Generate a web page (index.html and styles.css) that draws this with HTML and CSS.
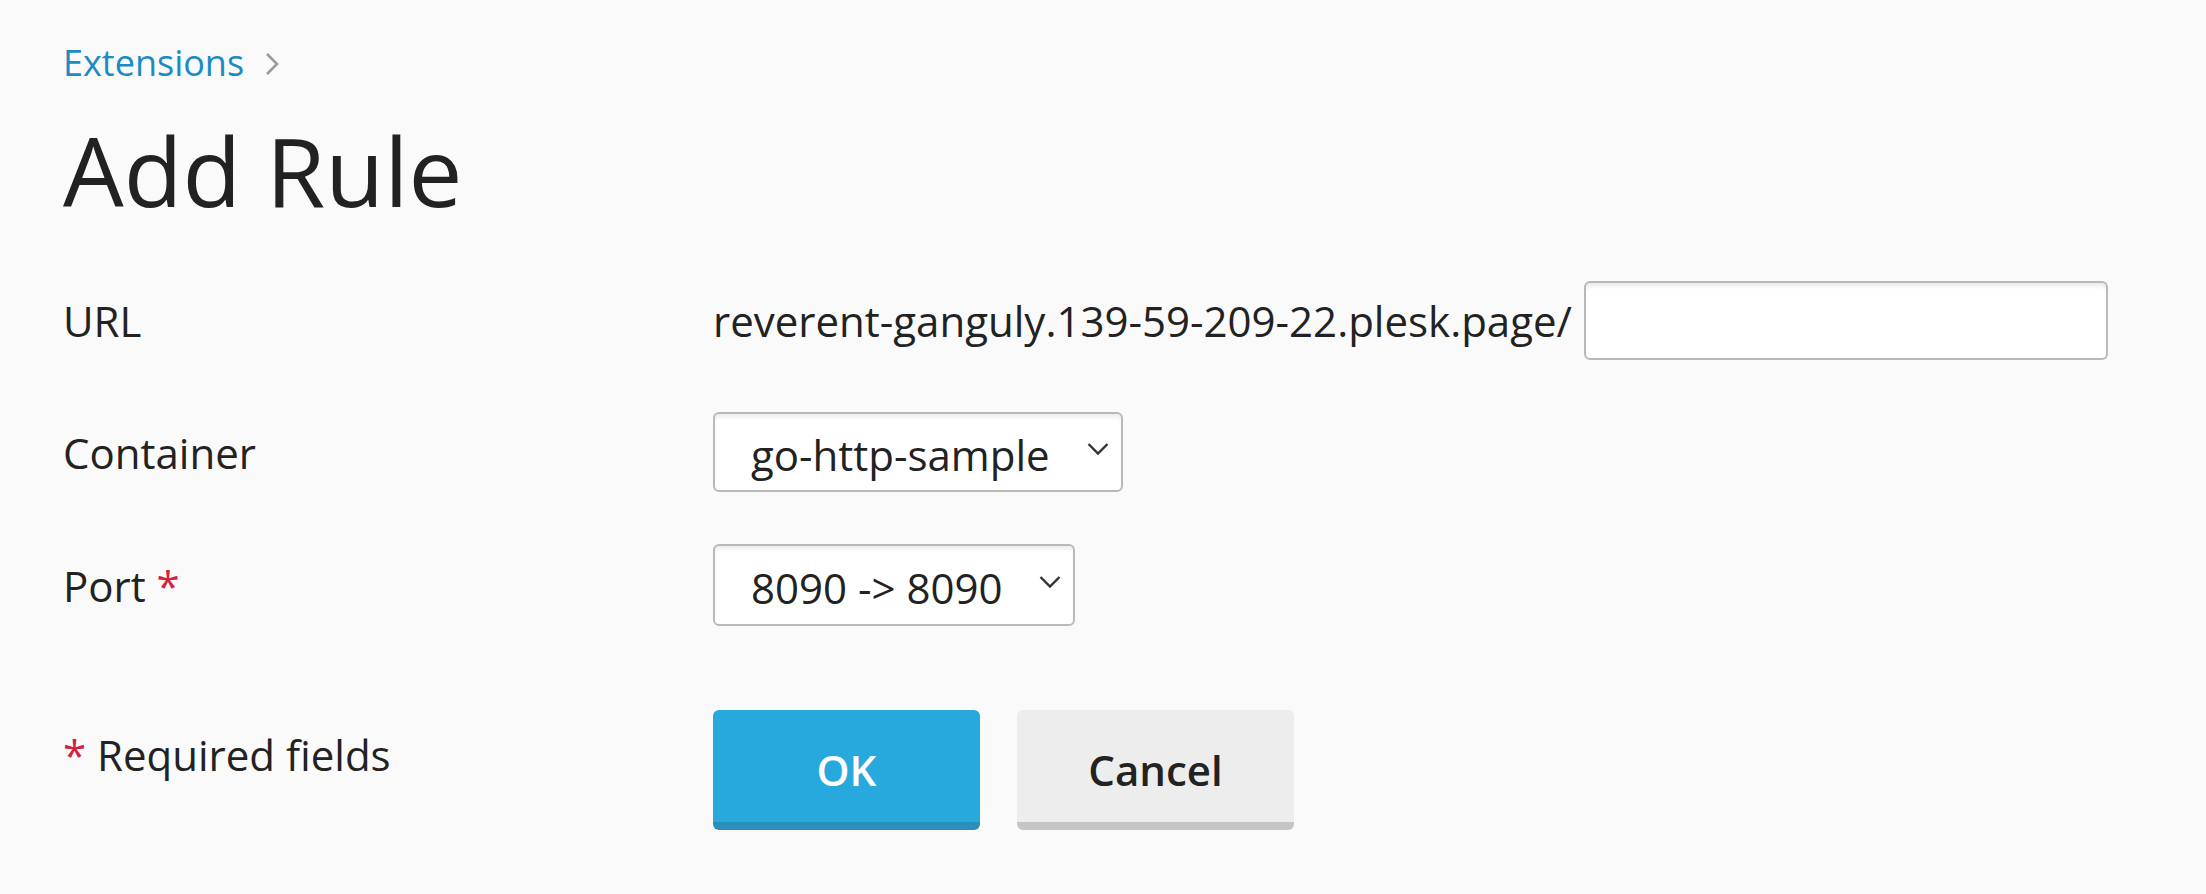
FILE: index.html
```html
<!DOCTYPE html>
<html lang="en">
<head>
<meta charset="utf-8">
<title>Add Rule</title>
<link rel="stylesheet" href="styles.css">
</head>
<body>
<div class="page">
  <nav class="breadcrumbs">
    <a class="crumb" href="#">Extensions</a>
    <svg class="crumb-sep" width="16" height="24" viewBox="0 0 16 24"><path d="M3 2 L13 12 L3 22" fill="none" stroke="#9a9a9a" stroke-width="2.6"/></svg>
  </nav>
  <h1 class="title">Add Rule</h1>
  <form class="form">
    <div class="row">
      <div class="label">URL</div>
      <div class="field">
        <span class="prefix">reverent-ganguly.139-59-209-22.plesk.page/</span>
        <input class="input" type="text">
      </div>
    </div>
    <div class="row">
      <div class="label">Container</div>
      <div class="field">
        <div class="select select-container">
          <span class="select-value">go-http-sample</span>
          <svg class="select-arrow" width="22" height="14" viewBox="0 0 22 14"><path d="M1.5 2 L11 11.5 L20.5 2" fill="none" stroke="#333" stroke-width="2.4"/></svg>
        </div>
      </div>
    </div>
    <div class="row">
      <div class="label">Port <span class="req">*</span></div>
      <div class="field">
        <div class="select select-port">
          <span class="select-value">8090 -&gt; 8090</span>
          <svg class="select-arrow" width="22" height="14" viewBox="0 0 22 14"><path d="M1.5 2 L11 11.5 L20.5 2" fill="none" stroke="#333" stroke-width="2.4"/></svg>
        </div>
      </div>
    </div>
    <div class="row row-buttons">
      <div class="label label-req"><span class="req">*</span> Required fields</div>
      <div class="field buttons">
        <button type="button" class="btn btn-primary">OK</button>
        <button type="button" class="btn btn-secondary">Cancel</button>
      </div>
    </div>
  </form>
</div>
</body>
</html>
```
FILE: styles.css
```css
html, body {
  margin: 0;
  padding: 0;
  background: #fafafa;
}
body {
  font-family: "Open Sans", "Noto Sans", "Liberation Sans", sans-serif;
  color: #222;
}
.page {
  padding: 39px 0 0 63px;
}
.breadcrumbs {
  display: flex;
  align-items: center;
  gap: 20px;
  height: 48px;
  font-size: 36px;
  line-height: 48px;
}
.crumb {
  color: #1a8bc3;
  text-decoration: none;
}
.crumb-sep {
  display: block;
  margin-top: 2px;
}
.title {
  margin: 24px 0 0 0;
  font-size: 96px;
  font-weight: 400;
  line-height: 118px;
  color: #222;
  letter-spacing: 0;
}
.form {
  margin-top: 52px;
  display: flex;
  flex-direction: column;
  gap: 52px;
}
.row {
  display: flex;
  align-items: center;
}
.label {
  width: 650px;
  flex: none;
  font-size: 42px;
  line-height: 57px;
  color: #222;
}
.req {
  color: #d4213f;
}
.field {
  display: flex;
  align-items: center;
  font-size: 42px;
  line-height: 57px;
}
.prefix {
  color: #222;
  margin-right: 12px;
}
.input {
  box-sizing: border-box;
  width: 524px;
  height: 79px;
  border: 2px solid #b9b9b9;
  border-radius: 6px;
  background: #fff;
  box-shadow: inset 0 5px 4px -2px rgba(0,0,0,0.09);
  outline: none;
  font: inherit;
}
.select {
  box-sizing: border-box;
  display: flex;
  align-items: center;
  justify-content: space-between;
  height: 80px;
  padding: 0 12px 0 36px;
  border: 2px solid #b9b9b9;
  border-radius: 6px;
  background: #fff;
  box-shadow: inset 0 5px 4px -2px rgba(0,0,0,0.08);
}
.select-container {
  width: 410px;
}
.select-port {
  width: 362px;
  height: 82px;
}
.select-value {
  color: #222;
  margin-top: 4px;
}
.select-arrow {
  display: block;
  margin-top: -6px;
}
.row-buttons {
  margin-top: 32px;
  align-items: flex-start;
}
.label-req {
  padding-top: 16px;
}
.buttons {
  gap: 37px;
}
.btn {
  box-sizing: border-box;
  height: 120px;
  border: none;
  border-radius: 6px;
  font-family: "Open Sans", "Noto Sans", "Liberation Sans", sans-serif;
  font-size: 42px;
  font-weight: 600;
  line-height: 57px;
  padding: 6px 0 0 0;
  cursor: pointer;
}
.btn-primary {
  width: 267px;
  background: #28a9de;
  color: #fff;
  border-bottom: 8px solid #2a8fbd;
}
.btn-secondary {
  width: 277px;
  background: #ededed;
  color: #222;
  border-bottom: 8px solid #c5c5c5;
}
```
